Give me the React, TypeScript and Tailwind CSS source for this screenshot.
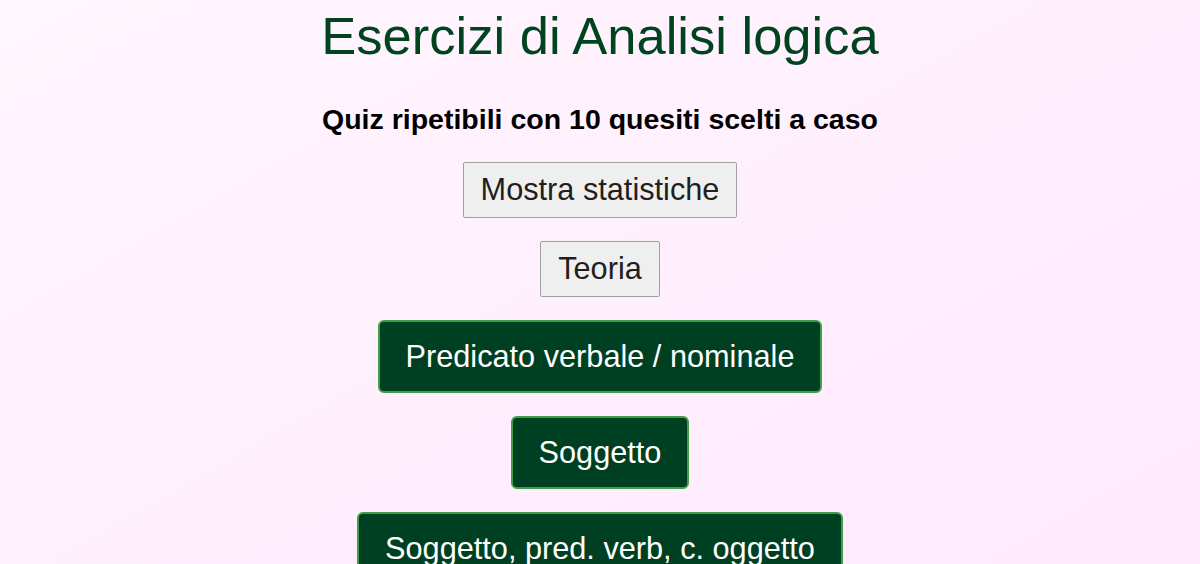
import React from 'react'

const greyButtons = ['Mostra statistiche', 'Teoria']
const quizButtons = [
  'Predicato verbale / nominale',
  'Soggetto',
  'Soggetto, pred. verb, c. oggetto',
  'Complemento oggetto',
]

const App: React.FC = () => {
  return (
    <div
      className="min-h-screen w-full bg-gradient-to-br from-[#fff6fe] to-[#ffe8fd] overflow-hidden"
      style={{ fontFamily: '"Liberation Sans", Arial, sans-serif' }}
    >
      <div className="flex flex-col items-center">
        <h1 className="mt-[6px] text-[52.5px] leading-[60px] text-[#00441f]">Esercizi di Analisi logica</h1>
        <h2 className="mt-[37px] text-[28.5px] leading-[33px] font-bold text-black">
          Quiz ripetibili con 10 quesiti scelti a caso
        </h2>

        <div className="mt-[26px] flex flex-col items-center gap-[23px]">
          {greyButtons.map((label) => (
            <button
              key={label}
              className="h-[56px] px-[17px] text-[30.7px] leading-[34px] text-[#1f1f1f] bg-[#efefef] border border-[#a0a0a0] rounded-[2px]"
            >
              {label}
            </button>
          ))}
          {quizButtons.map((label) => (
            <button
              key={label}
              className="h-[73px] px-[26px] text-[30.7px] leading-[34px] text-white bg-[#004022] border-2 border-[#3f9f45] rounded-[6px] shrink-0"
            >
              {label}
            </button>
          ))}
        </div>
      </div>
    </div>
  )
}

export default App
